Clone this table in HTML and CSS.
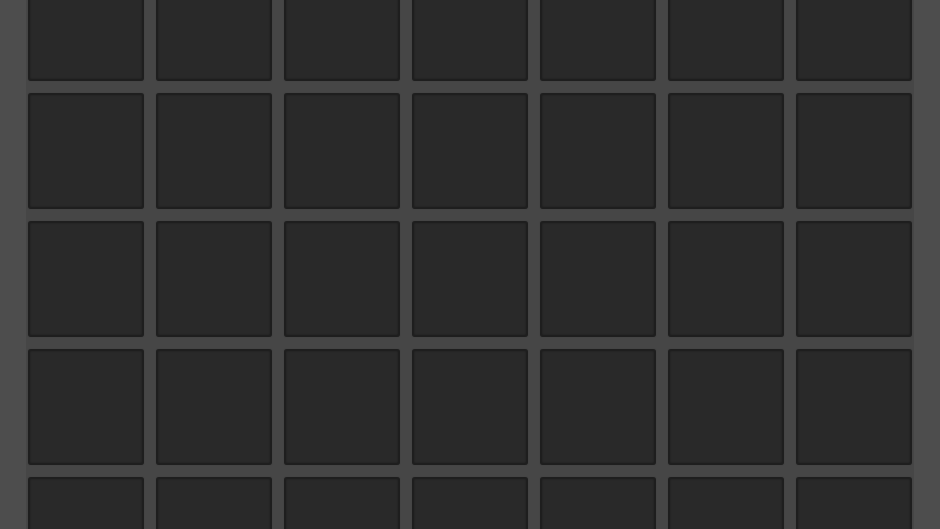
FILE: index.html
```html
<!DOCTYPE html>
<html>
<head>
<meta charset="utf-8">
<link rel="stylesheet" href="styles.css">
</head>
<body>
<div class="board">
  <div class="grid">
    <div class="cell"></div><div class="cell"></div><div class="cell"></div><div class="cell"></div><div class="cell"></div><div class="cell"></div><div class="cell"></div>
    <div class="cell"></div><div class="cell"></div><div class="cell"></div><div class="cell"></div><div class="cell"></div><div class="cell"></div><div class="cell"></div>
    <div class="cell"></div><div class="cell"></div><div class="cell"></div><div class="cell"></div><div class="cell"></div><div class="cell"></div><div class="cell"></div>
    <div class="cell"></div><div class="cell"></div><div class="cell"></div><div class="cell"></div><div class="cell"></div><div class="cell"></div><div class="cell"></div>
    <div class="cell"></div><div class="cell"></div><div class="cell"></div><div class="cell"></div><div class="cell"></div><div class="cell"></div><div class="cell"></div>
  </div>
</div>
</body>
</html>
```
FILE: styles.css
```css
html, body {
  margin: 0;
  padding: 0;
  height: 100%;
  overflow: hidden;
  background: #4d4d4d;
}
.board {
  margin-left: 26px;
  width: 888px;
  margin-top: -37px;
  padding: 2px;
  box-sizing: border-box;
  background: #464646;
}
.grid {
  display: grid;
  grid-template-columns: repeat(7, 116px);
  grid-auto-rows: 116px;
  gap: 12px;
}
.cell {
  box-sizing: border-box;
  background: #292929;
  border: 2px solid #1e1e1e;
  border-radius: 3px;
  box-shadow: inset 0 0 2px rgba(0, 0, 0, 0.35), 0 0 1px rgba(0, 0, 0, 0.25);
}
```
